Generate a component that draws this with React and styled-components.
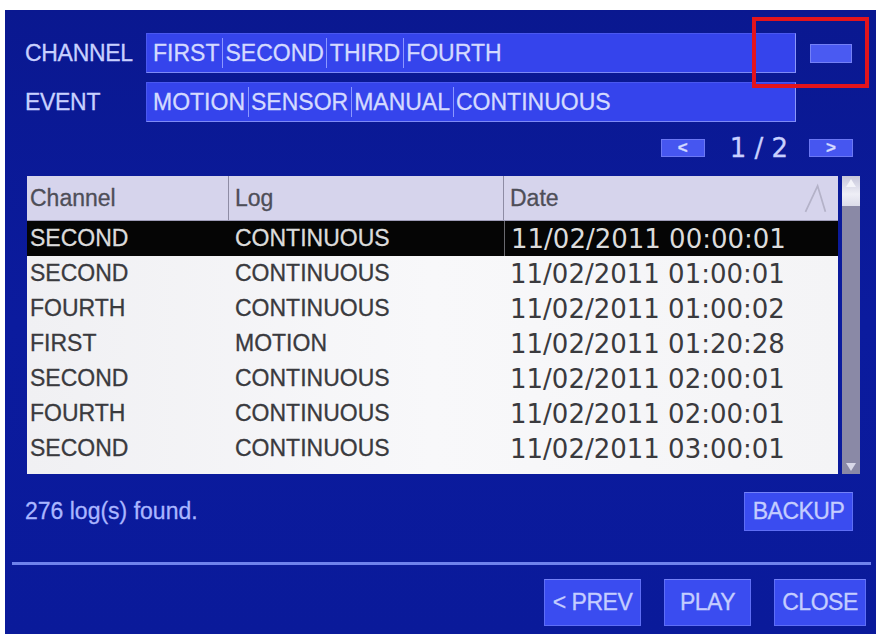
import React from "react";
import styled, { createGlobalStyle } from "styled-components";

const channels = ["FIRST", "SECOND", "THIRD", "FOURTH"];
const events = ["MOTION", "SENSOR", "MANUAL", "CONTINUOUS"];

const logs = [
  { channel: "SECOND", log: "CONTINUOUS", date: "11/02/2011 00:00:01" },
  { channel: "SECOND", log: "CONTINUOUS", date: "11/02/2011 01:00:01" },
  { channel: "FOURTH", log: "CONTINUOUS", date: "11/02/2011 01:00:02" },
  { channel: "FIRST", log: "MOTION", date: "11/02/2011 01:20:28" },
  { channel: "SECOND", log: "CONTINUOUS", date: "11/02/2011 02:00:01" },
  { channel: "FOURTH", log: "CONTINUOUS", date: "11/02/2011 02:00:01" },
  { channel: "SECOND", log: "CONTINUOUS", date: "11/02/2011 03:00:01" },
];

export default function App() {
  const selected = 0;

  return (
    <>
      <GlobalStyle />
      <Panel>
        <Highlight />
        <FilterRow>
          <Label>CHANNEL</Label>
          <Field>
            {channels.map((c, i) => (
              <React.Fragment key={c}>
                {i > 0 && <Pipe />}
                {c}
              </React.Fragment>
            ))}
          </Field>
          <MiniButton />
        </FilterRow>
        <FilterRow $gap>
          <Label>EVENT</Label>
          <Field>
            {events.map((e, i) => (
              <React.Fragment key={e}>
                {i > 0 && <Pipe />}
                {e}
              </React.Fragment>
            ))}
          </Field>
        </FilterRow>

        <Pager>
          <PageButton>&lt;</PageButton>
          <PageText>1 / 2</PageText>
          <PageButton>&gt;</PageButton>
        </Pager>

        <TableArea>
          <Table>
            <HeadRow>
              <HeadCell $w={202} $pad={3}>Channel</HeadCell>
              <HeadCell $w={275} $pad={6}>Log</HeadCell>
              <HeadCell $w={334} $pad={6} $last>
                Date
                <SortMark viewBox="0 0 30 36">
                  <path d="M4 34 L18 4 L27 34" fill="none" stroke="#b4b2c8" strokeWidth="2" />
                </SortMark>
              </HeadCell>
            </HeadRow>
            {logs.map((row, i) => (
              <Row key={i} $selected={i === selected}>
                <Cell $w={202} $pad={3}>{row.channel}</Cell>
                <Cell $w={275} $pad={6}>{row.log}</Cell>
                <DateCell $selected={i === selected}>{row.date}</DateCell>
              </Row>
            ))}
          </Table>
          <ScrollBar>
            <ScrollThumb>
              <svg width="12" height="10" viewBox="0 0 12 10">
                <path d="M6 1 L11 9 L1 9 Z" fill="#f4f4fa" />
              </svg>
            </ScrollThumb>
            <ScrollTrack />
            <ScrollEnd>
              <svg width="12" height="10" viewBox="0 0 12 10">
                <path d="M1 1 L11 1 L6 9 Z" fill="#d8d8e8" />
              </svg>
            </ScrollEnd>
          </ScrollBar>
        </TableArea>

        <Footer>
          <Count>276 log(s) found.</Count>
          <Button $w={109} $h={39}>BACKUP</Button>
        </Footer>

        <Divider />

        <Actions>
          <Button $w={97} $h={47}>&lt; PREV</Button>
          <Button $w={87} $h={47}>PLAY</Button>
          <Button $w={92} $h={47}>CLOSE</Button>
        </Actions>
      </Panel>
    </>
  );
}

const GlobalStyle = createGlobalStyle`
  body {
    margin: 0;
    background: #ffffff;
    overflow: hidden;
    font-family: "Liberation Sans", Arial, sans-serif;
  }
`;

const Panel = styled.div`
  position: relative;
  margin: 10px 0 0 5px;
  height: 624px;
  box-sizing: border-box;
  padding-top: 23px;
  background: linear-gradient(180deg, #0a1890 0%, #0b1b9e 50%, #0a1a9a 100%);
  display: flex;
  flex-direction: column;
  font-size: 23px;
  -webkit-text-stroke: 0.3px;
`;

const Highlight = styled.div`
  position: absolute;
  left: 747px;
  top: 7px;
  width: 117px;
  height: 71px;
  box-sizing: border-box;
  border: 4px solid #e3141c;
  pointer-events: none;
`;

const FilterRow = styled.div`
  display: flex;
  align-items: center;
  height: 40px;
  padding-left: 20px;
  margin-top: ${(p) => (p.$gap ? "9px" : "0")};
`;

const Label = styled.div`
  width: 121px;
  color: #c8d0ff;
  letter-spacing: -0.3px;
`;

const Field = styled.div`
  width: 650px;
  height: 40px;
  box-sizing: border-box;
  display: flex;
  align-items: center;
  padding-left: 6px;
  background: #3544ec;
  border: 1px solid #4a58f0;
  border-right-color: #8b96f8;
  border-bottom-color: #7e8af6;
  color: #d4daff;
  white-space: nowrap;
`;

const Pipe = styled.span`
  display: inline-block;
  width: 1px;
  height: 30px;
  margin: 0 2.5px;
  background: #8c98ff;
`;

const MiniButton = styled.div`
  width: 42px;
  height: 19px;
  margin-left: 14px;
  box-sizing: border-box;
  background: #4a5af2;
  border: 1px solid #7480f6;
`;

const Pager = styled.div`
  display: flex;
  align-items: center;
  justify-content: flex-end;
  height: 18px;
  margin-top: 17px;
  padding-right: 23px;
`;

const PageButton = styled.div`
  width: 44px;
  height: 18px;
  box-sizing: border-box;
  background: #4656f0;
  border: 1px solid #6c78f4;
  color: #d4daff;
  font-size: 17px;
  font-weight: bold;
  line-height: 15px;
  text-align: center;
`;

const PageText = styled.div`
  margin: 0 21px 0 25px;
  color: #c8d0ff;
  font-family: "DejaVu Sans", sans-serif;
  font-size: 26px;
  line-height: 18px;
`;

const TableArea = styled.div`
  display: flex;
  margin: 19px 0 0 22px;
  height: 298px;
`;

const Table = styled.div`
  width: 811px;
  display: flex;
  flex-direction: column;
  background: linear-gradient(90deg, #f0f0f3 0%, #f8f8fa 50%, #f4f4f6 100%);
`;

const HeadRow = styled.div`
  display: flex;
  height: 45px;
  background: #d6d4ec;
  border-bottom: 1px solid #9e9cb8;
  box-sizing: border-box;
`;

const HeadCell = styled.div`
  position: relative;
  width: ${(p) => p.$w}px;
  box-sizing: border-box;
  padding-left: ${(p) => p.$pad}px;
  display: flex;
  align-items: center;
  color: #4e4e58;
  border-right: ${(p) => (p.$last ? "none" : "1px solid #8e8ca4")};
`;

const SortMark = styled.svg`
  position: absolute;
  right: 10px;
  top: 5px;
  width: 26px;
  height: 34px;
`;

const Row = styled.div`
  display: flex;
  height: 35px;
  align-items: stretch;
  background: ${(p) => (p.$selected ? "#050505" : "transparent")};
  color: ${(p) => (p.$selected ? "#dcdcdc" : "#3a3a3e")};
`;

const Cell = styled.div`
  width: ${(p) => p.$w}px;
  box-sizing: border-box;
  padding-left: ${(p) => p.$pad}px;
  display: flex;
  align-items: center;
  white-space: nowrap;
`;

const DateCell = styled.div`
  width: 334px;
  box-sizing: border-box;
  padding-left: 6px;
  display: flex;
  align-items: center;
  font-family: "DejaVu Sans", sans-serif;
  font-size: 26px;
  -webkit-text-stroke: 0;
  white-space: nowrap;
  border-left: ${(p) => (p.$selected ? "1px solid #6a6a70" : "none")};
`;

const ScrollBar = styled.div`
  width: 18px;
  margin-left: 4px;
  display: flex;
  flex-direction: column;
  background: #8a89a6;
`;

const ScrollThumb = styled.div`
  height: 28px;
  display: flex;
  align-items: flex-start;
  justify-content: center;
  padding-top: 2px;
  background: linear-gradient(180deg, #c6c6da 0%, #eeeef6 60%, #dcdcea 100%);
`;

const ScrollTrack = styled.div`
  flex: 1;
`;

const ScrollEnd = styled.div`
  height: 14px;
  display: flex;
  align-items: center;
  justify-content: center;
`;

const Footer = styled.div`
  display: flex;
  align-items: center;
  justify-content: space-between;
  margin-top: 18px;
  padding: 0 23px 0 20px;
`;

const Count = styled.div`
  color: #aab6ff;
`;

const Button = styled.div`
  width: ${(p) => p.$w}px;
  height: ${(p) => p.$h}px;
  box-sizing: border-box;
  display: flex;
  align-items: center;
  justify-content: center;
  background: #3a4cf0;
  border: 1px solid #5e6ef6;
  border-top-color: #7482f8;
  color: #c4cdff;
  letter-spacing: -0.5px;
  white-space: nowrap;
`;

const Divider = styled.div`
  height: 3px;
  margin: 31px 5px 0 7px;
  background: #6f82ec;
`;

const Actions = styled.div`
  display: flex;
  justify-content: flex-end;
  gap: 23px;
  margin-top: 14px;
  padding-right: 10px;
`;
